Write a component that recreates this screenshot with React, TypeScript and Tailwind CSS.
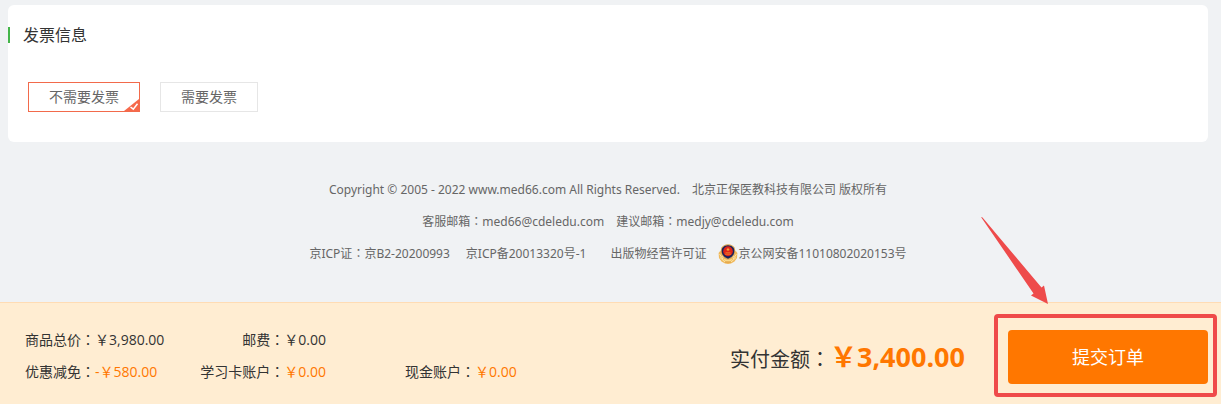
import { useState } from 'react'

const YEN = '\uFFE5'

function Colon() {
  return (
    <span lang="zh-TW" className="font-['Noto_Sans_CJK_TC',sans-serif] leading-none">
      {'\uFF1A'}
    </span>
  )
}

function PoliceBadge() {
  return (
    <svg viewBox="0 0 20 20" className="h-5 w-5 shrink-0" aria-hidden="true">
      <path d="M2.500 6.500 0.600 9 1 14 3.500 17.500 7 19.500 10 20 13 19.500 16.500 17.500 19 14 19.400 9 17.500 6.500 15.500 13 10 15.500 4.500 13Z" fill="#f0b85a" />
      <path d="M1.500 10 5 15.200M2 13.500 7 18M18.500 10 15 15.200M18 13.500 13 18" stroke="#fbe3a4" strokeWidth="1" fill="none" />
      <path d="M10 0.300Q14.500 0.500 16.500 3.500 18 7 16.300 11 14 15 10 15.800 6 15 3.700 11 2 7 3.500 3.500 5.500 0.500 10 0.300Z" fill="#d9a550" />
      <path d="M10 1.200Q14 1.400 15.700 4 17 7 15.500 10.500 13.500 14 10 14.700 6.500 14 4.500 10.500 3 7 4.300 4 6 1.400 10 1.200Z" fill="#17205e" />
      <ellipse cx="10" cy="7.300" rx="4.800" ry="5" fill="#dd2418" />
      <path d="M10 3.500 10.500 4.800 11.900 4.900 10.900 5.800 11.200 7 10 6.300 8.800 7 9.100 5.800 8.100 4.900 9.500 4.800Z" fill="#f8a53f" />
      <path d="M7.500 8.800H12.500M7 10.200H13" stroke="#f09433" strokeWidth="0.700" />
      <path d="M5.500 14.500Q10 17.300 14.500 14.500L12.800 17.500H7.200Z" fill="#f9d98c" />
      <path d="M7 18H13" stroke="#d99a3c" strokeWidth="0.800" />
    </svg>
  )
}

interface OptionProps {
  label: string
  checked: boolean
  onSelect: () => void
}

function InvoiceOption({ label, checked, onSelect }: OptionProps) {
  return (
    <label
      className={`relative flex h-[30px] cursor-pointer items-center border px-5 text-sm text-[#666] ${
        checked ? 'border-[#f26a4b]' : 'border-[#e6e6e6]'
      }`}
    >
      <input type="radio" name="invoice" className="sr-only" checked={checked} onChange={onSelect} />
      {label}
      {checked && (
        <svg viewBox="0 0 15 12" className="absolute right-0 bottom-0 h-3 w-[15px]" aria-hidden="true">
          <path d="M0 12 15 0V12Z" fill="#f6694b" />
          <path d="M6.500 8 9.300 10.200 13.500 4.800" fill="none" stroke="#fff" strokeWidth="1.500" />
        </svg>
      )}
    </label>
  )
}

function Amount({ label, value, accent = false }: { label: string; value: string; accent?: boolean }) {
  return (
    <div className="flex whitespace-nowrap">
      <dt>
        {label}
        <Colon />
      </dt>
      <dd className={accent ? 'text-[#ff7700]' : ''}>{value}</dd>
    </div>
  )
}

export default function App() {
  const [needInvoice, setNeedInvoice] = useState(false)

  return (
    <div
      lang="zh-CN"
      className="overflow-hidden bg-[#f0f2f4] pt-[5px] font-['Open_Sans','Noto_Sans_CJK_SC',sans-serif] text-[#333]"
    >
      <main className="mr-[13px] ml-2 rounded-md bg-white pt-[18px] pb-[30px]">
        <h2 className="flex h-6 items-center text-base">
          <span className="mr-[13px] h-4 w-0.5 bg-[#44b549]" />
          发票信息
        </h2>
        <div className="mt-[35px] ml-5 flex gap-5" role="radiogroup" aria-label="发票信息">
          <InvoiceOption label="不需要发票" checked={!needInvoice} onSelect={() => setNeedInvoice(false)} />
          <InvoiceOption label="需要发票" checked={needInvoice} onSelect={() => setNeedInvoice(true)} />
        </div>
      </main>

      <footer className="mt-8 mr-[13px] ml-2 flex flex-col items-center pb-8 font-['Noto_Sans','Noto_Sans_CJK_SC',sans-serif] text-xs leading-8 text-[#666]">
        <p className="flex gap-3">
          <span>Copyright © 2005 - 2022 www.med66.com All Rights Reserved.</span>
          <span>北京正保医教科技有限公司 版权所有</span>
        </p>
        <p className="flex gap-3">
          <span>客服邮箱<Colon />med66@cdeledu.com</span>
          <span>建议邮箱<Colon />medjy@cdeledu.com</span>
        </p>
        <p className="flex">
          <a href="#icp-license" className="mr-4">京ICP证<Colon />京B2-20200993</a>
          <a href="#icp-record" className="mr-6">京ICP备20013320号-1</a>
          <a href="#publication" className="mr-3">出版物经营许可证</a>
          <a href="#police-record" className="flex items-center"><PoliceBadge />京公网安备11010802020153号</a>
        </p>
      </footer>

      <section className="flex items-start justify-between border-t border-[#ffdcb4] bg-[#ffedd2] pr-[13px] pb-5 pl-[25px]">
        <dl className="grid grid-cols-[176px_125px_auto] pt-[21px] text-sm leading-8">
          <Amount label="商品总价" value={`${YEN}3,980.00`} />
          <div className="flex justify-end"><Amount label="邮费" value={`${YEN}0.00`} /></div>
          <div />
          <Amount label="优惠减免" value={`-${YEN}580.00`} accent />
          <div className="flex justify-end"><Amount label="学习卡账户" value={`${YEN}0.00`} accent /></div>
          <div className="ml-[79px]"><Amount label="现金账户" value={`${YEN}0.00`} accent /></div>
        </dl>
        <div className="flex pt-[27px]">
          <p className="mr-[43px] flex items-baseline leading-[54px] whitespace-nowrap">
            <span className="text-xl">实付金额<Colon /></span>
            <strong className="text-[27px] font-bold text-[#ff7700]">{YEN}3,400.00</strong>
          </p>
          <div className="relative">
            <button type="button" className="h-[54px] w-[200px] cursor-pointer rounded bg-[#ff7700] text-lg text-white">
              提交订单
            </button>
            <div className="pointer-events-none absolute -top-4 -right-[9px] -bottom-[13px] -left-3.5 rounded-sm border-4 border-[#ef4a4a]" />
            <svg viewBox="0 0 68 88" className="pointer-events-none absolute -top-[113px] -left-[27px] h-[88px] w-[68px]" aria-hidden="true">
              <path d="M0 0 1.500 0.500 60.500 70.500 63 68.500 67 87 50 78.500 52.500 76.500Z" fill="#ee4b4b" />
            </svg>
          </div>
        </div>
      </section>
    </div>
  )
}
